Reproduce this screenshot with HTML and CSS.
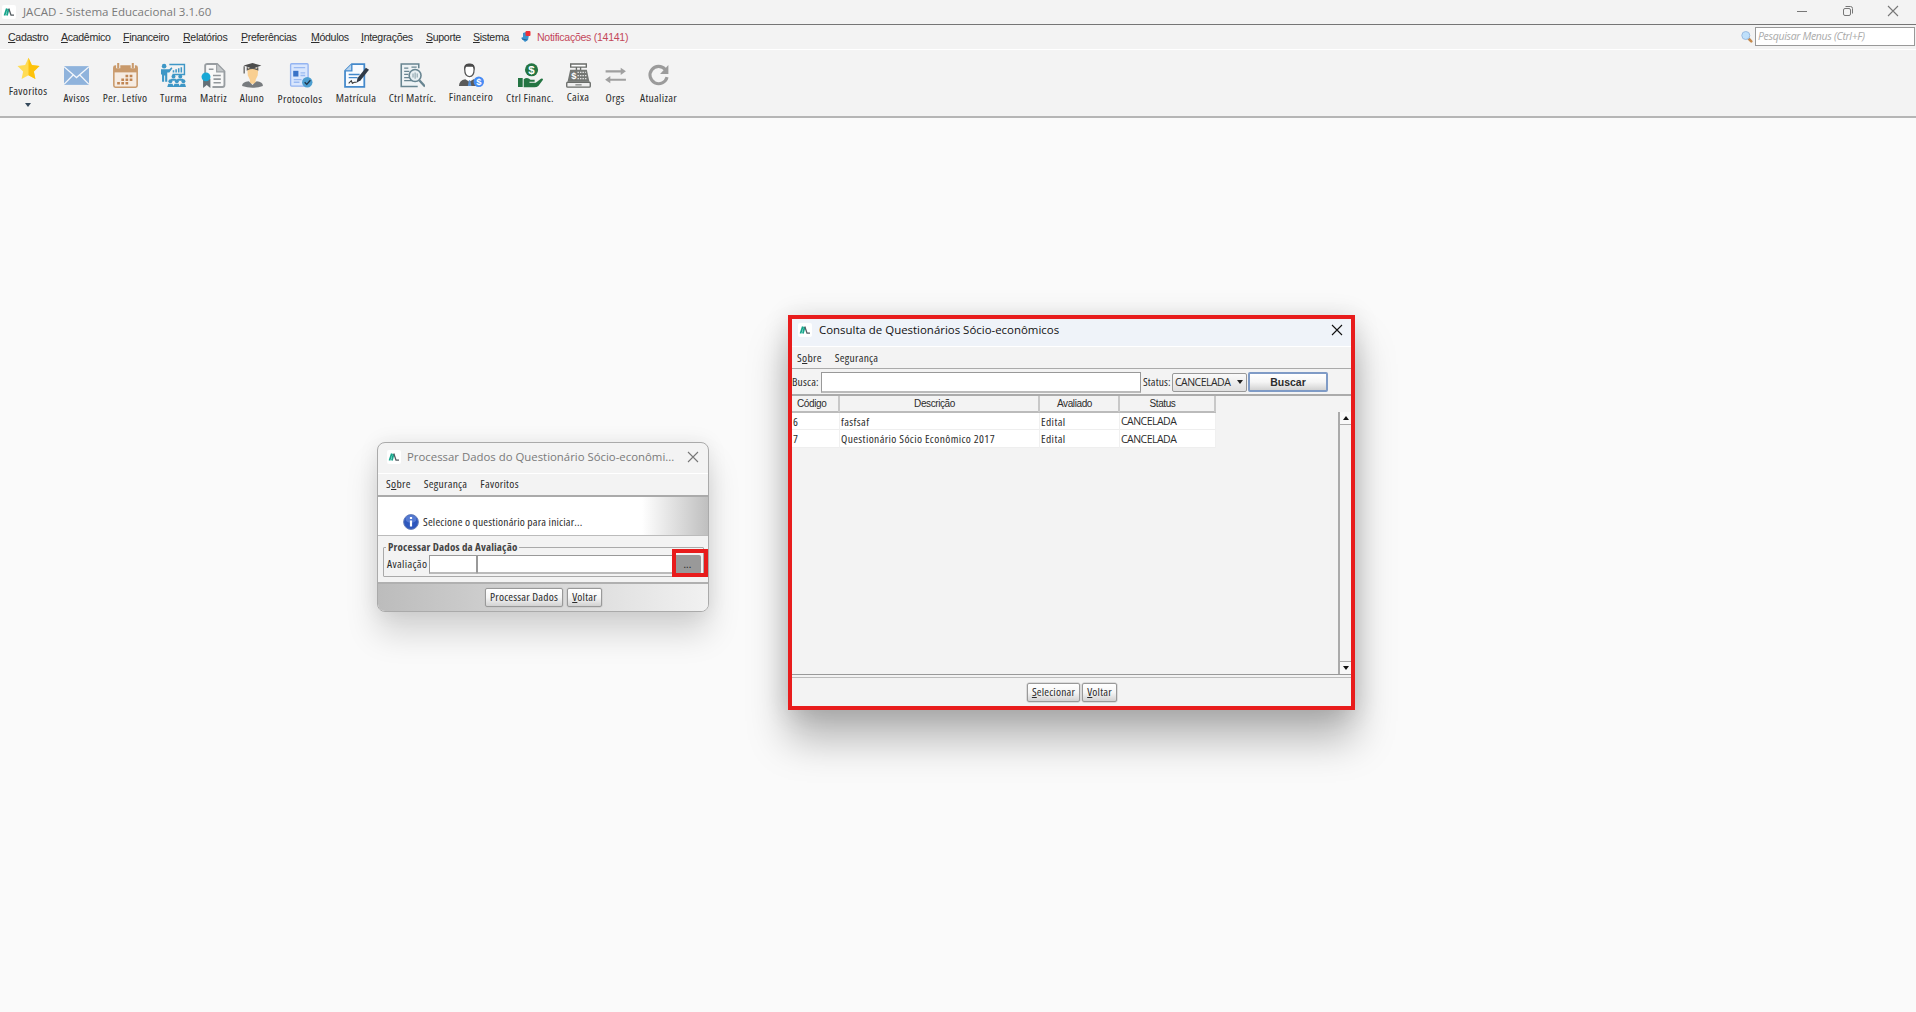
FILE: index.html
```html
<!DOCTYPE html>
<html lang="pt-BR">
<head>
<meta charset="utf-8">
<title>JACAD - Sistema Educacional</title>
<link rel="stylesheet" href="styles.css">
</head>
<body>
<svg width="0" height="0" class="defs" aria-hidden="true">
  <symbol id="logo" viewBox="0 0 14 14"><rect width="14" height="14" rx="2" fill="#fff"/><path d="M2.500 10.500 4.800 3.500M4.900 10.500 6.600 4" stroke="#17a68c" stroke-width="1.800"/><path d="M6.800 3.500 9 10.200H12" fill="none" stroke="#545c61" stroke-width="1.300"/></symbol>
  <symbol id="close" viewBox="0 0 12 12"><path d="M1 1 11 11M11 1 1 11" fill="none" stroke="currentColor" stroke-width="1.1"/></symbol>
</svg>

<header class="app">
  <div class="titlebar">
    <svg class="logo"><use href="#logo"/></svg>
    <span class="title">JACAD - Sistema Educacional 3.1.60</span>
    <div class="controls">
      <svg width="12" height="12"><path d="M1 6.5H11" stroke="currentColor"/></svg>
      <svg width="12" height="12" fill="none" stroke="currentColor"><rect x="1.5" y="3.5" width="7" height="7" rx="1.5"/><path d="M3.500 1.500H8.500a2 2 0 0 1 2 2V8.500"/></svg>
      <svg width="12" height="12"><use href="#close"/></svg>
    </div>
  </div>
  <nav class="menubar">
    <span class="w53"><u>C</u>adastro</span><span class="w62"><u>A</u>cadêmico</span><span class="w60"><u>F</u>inanceiro</span><span class="w58"><u>R</u>elatórios</span><span class="w70"><u>P</u>referências</span><span class="w50"><u>M</u>ódulos</span><span class="w65"><u>I</u>ntegrações</span><span class="w47"><u>S</u>uporte</span><span class="w48"><u>S</u>istema</span>
    <svg class="bell" width="11" height="12"><path d="M2 2 5 1 8 4 7 9 4 11 2 9 0 7 2 6Z" fill="#3c93cf"/><path d="M1 8 6 9" stroke="#24699d"/><rect x="4.500" y="0" width="5" height="5" rx="1" fill="#ee3038"/></svg>
    <span class="notice">Notificações (14141)</span>
    <div class="search">
      <svg width="12" height="12"><path d="M7.500 7.500 10.300 10.300" stroke="#c68a4c" stroke-width="2.600" stroke-linecap="round"/><circle cx="4.800" cy="4.500" r="4" fill="#bfe0fb" stroke="#9bbbe0"/></svg>
      <span class="searchbox">Pesquisar Menus (Ctrl+F)</span>
    </div>
  </nav>
  <div class="toolbar">
    <div class="tool fav"><svg viewBox="0 0 24 24"><path d="M12 .8 15.500 8.300 23.500 9.400 17.600 15 19.200 23 12 19 4.800 23 6.400 15 .5 9.400 8.500 8.300Z" fill="#ffdc55"/><path d="M12 .8 15.500 8.300 23.500 9.400 17.600 15 19.200 23 12 19Z" fill="#fdc20b"/></svg><span>Favoritos</span><i class="drop"></i></div>
    <div class="tool"><svg viewBox="0 0 24 24"><rect y="3" width="24" height="18" fill="#8fb3dc"/><path d="M0 3.500 12 14 24 3.500M0 20.500 8.800 11.500M24 20.500 15.200 11.500" fill="none" stroke="#f4f7fb" stroke-width="1.200"/></svg><span>Avisos</span></div>
    <div class="tool"><svg viewBox="0 0 24 24"><rect x=".8" y="3" width="22.400" height="20.200" rx="1.500" fill="#f6ece3" stroke="#c99a6c" stroke-width="1.500"/><path d="M1 3H23V9H1Z" fill="#c99a6c"/><path d="M5 0V5M19 0V5" stroke="#f4f4f4" stroke-width="4"/><path d="M5 0V5M19 0V5" stroke="#c99a6c" stroke-width="2"/><path d="M12 12.500H20M8 16H20M4 19.500H16" stroke="#c08553" stroke-width="2.400" stroke-dasharray="2.600 1.400"/></svg><span>Per. Letívo</span></div>
    <div class="tool"><svg viewBox="0 0 24 24" fill="#3e97c6"><circle cx="3" cy="3" r="2.200"/><path d="M0 6H8L10 4 11 5 8 9H6V18H4V12H3V18H1V11H0Z"/><path d="M8 1.500H22.500V11H11" fill="none" stroke="#3e97c6" stroke-width="1.400"/><path d="M12 9V7M14.500 9V6M17 9V5M19.500 9V4" stroke="#3e97c6" stroke-width="1.500"/><circle cx="12" cy="13" r="1.900"/><circle cx="18.500" cy="13" r="1.900"/><circle cx="9" cy="17.500" r="1.900"/><circle cx="15.200" cy="17.500" r="1.900"/><circle cx="21.500" cy="17.500" r="1.900"/><path d="M9 17 10 15H14L15 17 16 15H21L22 17ZM6 23 7 20H11L12 22 13 20H17L18 22 19 20H23L24 23Z"/></svg><span>Turma</span></div>
    <div class="tool"><svg viewBox="0 0 24 24"><path d="M4 10V2.500Q4 1 6 1H15.500L22.500 8V21Q22.500 23 20.500 23H11" fill="#f8f8f8" stroke="#989da1" stroke-width="1.800"/><path d="M15 1V8.500H22.500" fill="#c2c6c8" stroke="#989da1"/><path d="M7.500 6H12M11.500 12H19M12 15.500H19M12 19H19" stroke="#92979b" stroke-width="1.500"/><path d="M2 15H9V24L5.500 21 2 24Z" fill="#646f76"/><circle cx="4.800" cy="13.300" r="4.300" fill="#18a8d6"/></svg><span>Matriz</span></div>
    <div class="tool"><svg viewBox="0 0 24 24"><path d="M7 5H17.500L17 12 15 16V20H9.500V16L7.500 12Z" fill="#f9cf91"/><path d="M2 22Q2 18 8.500 17.500L12 21 16 17.500Q22 18 22 22Q12 25.500 2 22Z" fill="#777b7e"/><path d="M12 0 20.500 2.500 12 5.500 3.500 2.500Z" fill="#4c4c4c"/><path d="M7 4V6.500Q12 4 17 6.500V4M4 3V10" fill="none" stroke="#5a5a5a" stroke-width="1.200"/></svg><span>Aluno</span></div>
    <div class="tool low"><svg viewBox="0 0 24 24"><rect x="2.500" y=".7" width="16.800" height="21.500" rx="1" fill="#d9e6fd" stroke="#94b4f1" stroke-width="1.300"/><path d="M5.500 4.500H16.500M12 9.500H16.500M12 12H16.500M5.500 16H13M5.500 18.500H11" stroke="#9abaf2" stroke-width="1.300"/><rect x="5" y="7.500" width="5" height="5.500" fill="#3972c7"/><circle cx="18.500" cy="18.500" r="5" fill="#4c9ed0"/><path d="M16 18.500 18 20.500 21.500 16.500" fill="none" stroke="#213548" stroke-width="1.300"/></svg><span>Protocolos</span></div>
    <div class="tool"><svg viewBox="0 0 24 24"><path d="M7.500 1H19.500V23H1V7.500Z" fill="#f8fbff" stroke="#4489cb" stroke-width="1.700"/><path d="M1 7.500H7.500V1" fill="#b6d4ef" stroke="#4489cb" stroke-width="1.300"/><path d="M4.500 11H15M4.500 14H13" stroke="#4489cb" stroke-width="1.300"/><path d="M4.500 19.500 7 17 8 19.500 10 18.500H12" fill="none" stroke="#333" stroke-width="1"/><path d="M12 19 13 14.500 21 4.500 24 6.500 16 16.500Z" fill="#303a47"/></svg><span>Matrícula</span></div>
    <div class="tool"><svg viewBox="0 0 24 24"><path d="M18 5V1H1.200V22.500H17" fill="#eef3f5" stroke="#688591" stroke-width="1.500"/><path d="M4 5H8M4 8H9M4 11H8M4 14H9M4 17H12M11 4H16" stroke="#688591" stroke-width="1.200"/><circle cx="14.500" cy="12" r="5.700" fill="#e8eff2" stroke="#688591" stroke-width="1.500"/><path d="M12.500 14V10M14.500 15V9M16.500 14V10" stroke="#88a0aa"/><path d="M18.500 16.500 24 22.500" stroke="#688591" stroke-width="2.300"/></svg><span>Ctrl Matríc.</span></div>
    <div class="tool high"><svg viewBox="0 0 24 24"><path d="M0 22Q0 16.500 6 15.500L10 18 14 15.500Q17 16 18 18V22Z" fill="#5a5a5a"/><path d="M7 15V11H12.500V15L10 18Z" fill="#fff"/><path d="M9.500 16.500 8.500 22H12L10.700 16.500Z" fill="#5790d6"/><path d="M5.500 6Q5.500 1.500 10 1.500T14.500 6Q14.500 13 10 13T5.500 6Z" fill="#fff" stroke="#555" stroke-width="1.200"/><path d="M5 7Q4 0 10 .5 16 0 15 7L13.500 3.500H6.500Z" fill="#4a4a4a"/><circle cx="19" cy="18" r="5" fill="#468cf4"/><text x="19" y="21.500" text-anchor="middle" class="coin">$</text></svg><span>Financeiro</span></div>
    <div class="tool"><svg viewBox="0 0 24 24"><path d="M0 14.500H4.500V23H0ZM5.500 15.500Q9 13 12 16H16V18H11V19H17L22 15Q24 14.500 24 16L19.500 22Q18 23.500 15 23.300H5.500Z" fill="#247543"/><circle cx="13" cy="6.500" r="6.300" fill="#247543"/><text x="13" y="10.500" text-anchor="middle" class="coin big">$</text></svg><span>Ctrl Financ.</span></div>
    <div class="tool high"><svg viewBox="0 0 24 24"><path d="M4.500 1H19.500V4H4.500ZM10 4V7M14 4V7" fill="#fff" stroke="#696c69" stroke-width="1.300"/><path d="M4 6.500H20L22.500 18H1.500Z" fill="#747774"/><path d="M11 9H19M11 12H20M11 15H20.500" stroke="#e3e3e3" stroke-width="1.200" stroke-dasharray="1.400 1"/><text x="7.500" y="15.500" text-anchor="middle" class="coin">$</text><rect x=".7" y="18.500" width="22.600" height="4.700" rx="1" fill="#eee" stroke="#696c69" stroke-width="1.300"/><path d="M9 21H15" stroke="#696c69"/></svg><span>Caixa</span></div>
    <div class="tool"><svg viewBox="0 0 24 24"><path d="M2.500 8H19M5.500 16H22" stroke="#a0a0a0" stroke-width="2"/><path d="M17 4.500 22 8 17 11.500ZM7 12.500 2 16 7 19.500Z" fill="#a0a0a0"/></svg><span>Orgs</span></div>
    <div class="tool"><svg viewBox="0 0 24 24"><path d="M18.500 6.200A8.300 8.300 0 1 0 20.200 13.500" fill="none" stroke="#9b9b9b" stroke-width="3"/><path d="M21.500 2V10.500H13.500Z" fill="#9b9b9b"/></svg><span>Atualizar</span></div>
  </div>
</header>

<main class="desktop">
  <section class="window process">
    <div class="win-title">
      <svg class="logo"><use href="#logo"/></svg><span class="title">Processar Dados do Questionário Sócio-econômi...</span>
      <svg class="x"><use href="#close"/></svg>
    </div>
    <nav class="win-menu"><span>S<u>o</u>bre</span><span>Segurança</span><span>Favoritos</span></nav>
    <div class="message">
      <svg width="16" height="16"><circle cx="8" cy="8" r="7.400" fill="#2d57bd" stroke="#6c83b9"/><ellipse cx="8" cy="5" rx="5.500" ry="3.800" fill="#6f91df" opacity=".6"/><path d="M8 3V5M8 6.500V12.500" stroke="#fff" stroke-width="2.200"/></svg>
      <span>Selecione o questionário para iniciar...</span>
    </div>
    <div class="form">
      <fieldset><legend>Processar Dados da Avaliação</legend>
        <div class="field"><label>Avaliação</label><span class="input code"></span><span class="input name"></span><span class="browse">...</span></div>
      </fieldset>
      <div class="mark"></div>
    </div>
    <footer><span class="btn b1">Processar Dados</span><span class="btn b2"><u>V</u>oltar</span></footer>
  </section>

  <section class="window lookup">
    <div class="win-title">
      <svg class="logo"><use href="#logo"/></svg><span class="title">Consulta de Questionários Sócio-econômicos</span>
      <svg class="x"><use href="#close"/></svg>
    </div>
    <nav class="win-menu"><span>S<u>o</u>bre</span><span>Segurança</span></nav>
    <div class="filter"><label class="l1">Busca:</label><span class="input query"></span><label class="l2">Status:</label><span class="combo"><span>CANCELADA</span><i></i></span><span class="btn find">Buscar</span></div>
    <div class="results">
      <div class="grid">
        <div class="row head"><span>Código</span><span>Descrição</span><span>Avaliado</span><span>Status</span></div>
        <div class="row"><span>6</span><span>fasfsaf</span><span>Edital</span><span class="caps">CANCELADA</span></div>
        <div class="row"><span>7</span><span>Questionário Sócio Econômico 2017</span><span>Edital</span><span class="caps">CANCELADA</span></div>
      </div>
      <div class="scroll"><b class="up"></b><b class="down"></b></div>
    </div>
    <footer><span class="btn s1"><u>S</u>elecionar</span><span class="btn s2"><u>V</u>oltar</span></footer>
  </section>
</main>
</body>
</html>
```
FILE: styles.css
```css
* { box-sizing: border-box; }
body {
  margin: 0;
  height: 1012px;
  overflow: hidden;
  background: #fafafa;
  color: #2c2c2c;
  font: 11.5px/14px "Open Sans", "Noto Sans", sans-serif;
  font-stretch: 75%;
  letter-spacing: .19px;
  white-space: nowrap;
}
svg { display: block; flex: none; }
.defs { position: absolute; }
u { text-underline-offset: 1px; }

.app { height: 118px; background: #f3f3f3; border-bottom: 2px solid #b5b5b5; }
.titlebar { display: flex; align-items: center; height: 25px; padding: 0 17px 0 2px; border-bottom: 1px solid #757575; }
.logo { width: 14px; height: 14px; }
.title { font-size: 11.45px; font-stretch: 100%; letter-spacing: 0; color: #7a7a7a; }
.titlebar .title { margin-left: 7px; font-size: 11.55px; }
.controls { display: flex; gap: 33.5px; margin-left: auto; color: #777; padding-bottom: 2px; }

.menubar {
  display: flex;
  align-items: center;
  height: 25px;
  padding: 0 1px 1px 8px;
  border-bottom: 1px solid #fff;
  font: 10.6px/14px "Liberation Sans", Arial, sans-serif;
  letter-spacing: -.33px;
}
.w47 { width: 47px; } .w48 { width: 48px; } .w50 { width: 50px; }
.w53 { width: 53px; } .w58 { width: 58px; } .w60 { width: 60px; }
.w62 { width: 62px; } .w65 { width: 65px; } .w70 { width: 70px; }
.notice { margin-left: 5px; color: #c4485a; letter-spacing: -.3px; }
.search { display: flex; align-items: center; gap: 2px; margin-left: auto; }
.searchbox {
  width: 160px; height: 19px; padding: 1px 2px;
  border: 1px solid #999; background: #fff; color: #aaa;
  font: italic 10.5px/15px "Open Sans", sans-serif; font-stretch: 100%; letter-spacing: -.33px;
}

.toolbar {
  display: grid;
  grid-template-columns: 56px 41px 56px 41px 39px 38px 58px 54px 59px 58px 60px 36px 38px 49px;
  padding-top: 13px;
}
.tool { display: flex; flex-direction: column; align-items: center; letter-spacing: .3px; }
.tool svg { width: 25px; height: 25px; }
.tool span { margin-top: 3px; }
.tool.low span { margin-top: 4px; }
.tool.high span { margin-top: 2px; }
.tool.fav { margin-top: -6px; }
.tool.fav svg { width: 23px; height: 23px; }
.tool.fav span { margin-top: 4px; }
.drop { margin-top: 5px; border: 3.5px solid transparent; border-top: 4px solid #35495c; border-bottom: 0; }
.coin { fill: #fff; font: bold 9px "Liberation Sans", sans-serif; letter-spacing: 0; }
.coin.big { font-size: 11px; }

.window { position: absolute; display: flex; flex-direction: column; background: #f3f3f3; }
.win-title { display: flex; align-items: center; border-bottom: 1px solid #fff; }
.win-title .x { width: 12px; height: 12px; margin-left: auto; }
.win-menu { display: flex; align-items: center; letter-spacing: .28px; }
.win-menu span:nth-child(2) { margin: 0 13px; }
.input { border: 1px solid #999; border-width: 1px 1px 2px; border-color: #999 #999 #bbb; background: #fff; }
.btn {
  display: block; height: 19px; line-height: 16px; text-align: center;
  border: 1px solid #999; border-radius: 2px; box-shadow: 0 0 0 .5px #c4c4c4;
  background: linear-gradient(#fff, #f5f5f5 50%, #d2d2d2);
}

.process {
  left: 377px; top: 442px; width: 332px; height: 170px;
  border: 1px solid #aaa; border-radius: 8px; overflow: hidden;
  box-shadow: 0 22px 32px rgba(0, 0, 0, .15), 0 0 20px rgba(0, 0, 0, .08);
}
.process .win-title { height: 31px; padding: 0 9px 2px 9px; color: #777; }
.process .title { margin-left: 6px; font-size: 11.38px; }
.process .win-menu { height: 23px; padding-left: 8px; padding-bottom: 1px; border-bottom: 2px solid #aaa; }
.message {
  display: flex; align-items: center; gap: 4px; height: 39px; padding: 12px 0 0 25px;
  border-bottom: 1px solid #bbb;
  background: linear-gradient(90deg, #fff 80%, #bfbfbf);
}
.form { position: relative; height: 48px; padding: 4px 4px 0 5px; border-bottom: 2px solid #b0b0b0; }
fieldset { margin: 0; height: 37px; padding: 0 0 0 3px; border: 1px solid #aaa; border-radius: 1px; }
legend { padding: 0 2px; margin-left: -1px; font: bold 11px/14px "Open Sans", sans-serif; font-stretch: 75%; letter-spacing: .16px; color: #444; }
.field { display: flex; align-items: center; height: 20px; }
.field label { width: 42px; margin-top: -1px; letter-spacing: .35px; }
.code { width: 48px; height: 19px; }
.name { width: 197px; height: 19px; border-left-width: 1px; }
.browse { width: 27px; height: 19px; line-height: 17px; text-align: center; background: #999; color: #222; border-radius: 2px; }
.mark { position: absolute; left: 294px; top: 13px; width: 36px; height: 28px; border: 4px solid #e81c1c; }
.process footer { flex: 1; display: flex; padding: 4px 0 0 107px; gap: 4px; background: linear-gradient(90deg, #bcbcbc, #f1f1f1); }
.b1 { width: 78px; } .b2 { width: 35px; }

.lookup {
  left: 788px; top: 315px; width: 567px; height: 395px;
  border: 4px solid #e81c1c;
  box-shadow: 0 30px 38px rgba(0, 0, 0, .27), 0 2px 24px rgba(0, 0, 0, .14);
}
.lookup .win-title { height: 28px; padding: 0 8px 5px 6px; background: #eff3f9; color: #111; }
.lookup .title { margin-left: 7px; color: #111; }
.lookup .win-menu { height: 22px; padding-left: 5px; border-bottom: 1px solid #aaa; }
.filter { display: flex; align-items: center; height: 27px; padding-top: 1px; border-bottom: 2px solid #ababab; }
.l1 { width: 29px; } .l2 { width: 29px; margin-left: 2px; letter-spacing: .1px; }
.query { width: 320px; height: 21px; }
.combo {
  display: flex; align-items: center; justify-content: space-between; width: 75px; height: 19px; padding: 0 3px 0 2px;
  border: 1px solid #999; border-radius: 2px; background: linear-gradient(#fafafa, #e0e0e0);
}
.combo span, .caps { font-size: 10.5px; font-stretch: 100%; letter-spacing: -.52px; }
.combo i { border: 3.5px solid transparent; border-top: 4.5px solid #222; border-bottom: 0; }
.find {
  width: 80px; height: 20px; margin-left: 1px; border: 2px solid #7f9bc6;
  font: bold 10.5px/16px "Liberation Sans", Arial, sans-serif; letter-spacing: 0; box-shadow: none;
}
.results { display: flex; justify-content: space-between; height: 279px; border-bottom: 1px solid #999; }
.grid { width: 424px; }
.row { display: grid; grid-template-columns: 48px 200px 80px 96px; height: 17px; line-height: 17px; background: #fff; border-bottom: 1px solid #eee; letter-spacing: .38px; }
.row + .row + .row { height: 18px; line-height: 18px; }
.row span { padding-left: 1px; border-right: 1px solid #f0f0f0; }
.row .caps { padding-left: 1px; letter-spacing: -.52px; }
.row.head { height: 17px; background: #f3f3f3; border-bottom: 2px solid #bbb; font: 10px/16px "Liberation Sans", Arial, sans-serif; letter-spacing: -.4px; }
.row.head span { text-align: center; border-right: 2px solid #c8c8c8; }
.row.head span:first-child { text-align: left; padding-left: 5px; }
.row.head span:nth-child(2) { padding-right: 10px; }
.row.head span:nth-child(3), .row.head span:nth-child(4) { padding-right: 10px; }
.scroll { display: flex; flex-direction: column; justify-content: space-between; width: 13px; margin-top: 16px; border-left: 2px solid #aaa; background: #f3f3f3; }
.scroll b { display: flex; align-items: center; justify-content: center; height: 13px; border: 0 solid #aaa; border-bottom-width: 1px; background: #f8f8f8; }
.scroll b::after { content: ""; border: 3.5px solid transparent; }
.up::after { border-bottom: 4px solid #111 !important; border-top: 0 !important; }
.down::after { border-top: 4px solid #111 !important; border-bottom: 0 !important; }
.scroll .down { border-width: 1px 0 0; }
.lookup footer { flex: 1; display: flex; gap: 2px; margin-top: 2px; padding: 5px 0 0 235px; border-top: 1px solid #bbb; }
.s1 { width: 53px; } .s2 { width: 35px; }
```
